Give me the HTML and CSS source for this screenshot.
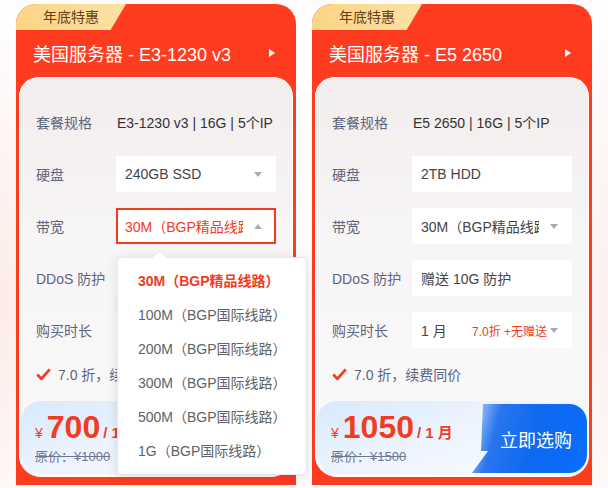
FILE: index.html
```html
<!DOCTYPE html>
<html lang="zh-CN">
<head>
    <meta charset="UTF-8">
    <meta name="viewport" content="width=device-width, initial-scale=1.0">
    <title>美国服务器 - 年底特惠</title>
    <link rel="stylesheet" href="styles.css">
</head>
<body>
    <div class="cards">
        <!-- E3-1230 v3 -->
        <div class="card">
            <div class="tag">年底特惠</div>
            <div class="card-title">
                <span>美国服务器 - E3-1230 v3</span>
                <i class="arrow-right"></i>
            </div>
            <div class="panel">
                <div class="row">
                    <span class="label">套餐规格</span>
                    <span class="plain">E3-1230 v3 | 16G | 5个IP</span>
                </div>
                <div class="row">
                    <span class="label">硬盘</span>
                    <div class="select">
                        <span class="select-text">240GB SSD</span>
                        <i class="caret"></i>
                    </div>
                </div>
                <div class="row">
                    <span class="label">带宽</span>
                    <div class="select is-open">
                        <span class="select-text">30M（BGP精品线路）</span>
                        <i class="caret up"></i>
                        <ul class="dropdown">
                            <li class="active">30M（BGP精品线路）</li>
                            <li>100M（BGP国际线路）</li>
                            <li>200M（BGP国际线路）</li>
                            <li>300M（BGP国际线路）</li>
                            <li>500M（BGP国际线路）</li>
                            <li>1G（BGP国际线路）</li>
                        </ul>
                    </div>
                </div>
                <div class="row">
                    <span class="label">DDoS 防护</span>
                    <div class="select">
                        <span class="select-text">赠送 10G 防护</span>
                    </div>
                </div>
                <div class="row">
                    <span class="label">购买时长</span>
                    <div class="select">
                        <span class="select-text">1 月</span>
                        <span class="discount">7.0折 +无赠送</span>
                        <i class="caret"></i>
                    </div>
                </div>
                <div class="note">
                    <svg class="check" width="15" height="13" viewBox="0 0 15 13"><path d="M1.2 6.6 L5.4 10.8 L13.8 1.4" fill="none" stroke="#f23c24" stroke-width="2.8" stroke-linejoin="round"/></svg>
                    <span>7.0 折，续费同价</span>
                </div>
                <div class="price-box">
                    <div class="price-info">
                        <div class="price"><span class="yen">¥</span><span class="amount">700</span><span class="unit">/ 1 月</span></div>
                        <div class="origin">原价：¥1000</div>
                    </div>
                    <a class="buy" href="#">立即选购</a>
                </div>
            </div>
        </div>

        <!-- E5 2650 -->
        <div class="card">
            <div class="tag">年底特惠</div>
            <div class="card-title">
                <span>美国服务器 - E5 2650</span>
                <i class="arrow-right"></i>
            </div>
            <div class="panel">
                <div class="row">
                    <span class="label">套餐规格</span>
                    <span class="plain">E5 2650 | 16G | 5个IP</span>
                </div>
                <div class="row">
                    <span class="label">硬盘</span>
                    <div class="select">
                        <span class="select-text">2TB HDD</span>
                    </div>
                </div>
                <div class="row">
                    <span class="label">带宽</span>
                    <div class="select">
                        <span class="select-text">30M（BGP精品线路）</span>
                        <i class="caret"></i>
                    </div>
                </div>
                <div class="row">
                    <span class="label">DDoS 防护</span>
                    <div class="select">
                        <span class="select-text">赠送 10G 防护</span>
                    </div>
                </div>
                <div class="row">
                    <span class="label">购买时长</span>
                    <div class="select">
                        <span class="select-text">1 月</span>
                        <span class="discount">7.0折 +无赠送</span>
                        <i class="caret"></i>
                    </div>
                </div>
                <div class="note">
                    <svg class="check" width="15" height="13" viewBox="0 0 15 13"><path d="M1.2 6.6 L5.4 10.8 L13.8 1.4" fill="none" stroke="#f23c24" stroke-width="2.8" stroke-linejoin="round"/></svg>
                    <span>7.0 折，续费同价</span>
                </div>
                <div class="price-box">
                    <div class="price-info">
                        <div class="price"><span class="yen">¥</span><span class="amount">1050</span><span class="unit">/ 1 月</span></div>
                        <div class="origin">原价：¥1500</div>
                    </div>
                    <a class="buy" href="#">立即选购</a>
                </div>
            </div>
        </div>
    </div>
</body>
</html>
```

FILE: styles.css
```css
* {
    margin: 0;
    padding: 0;
    box-sizing: border-box;
}

body {
    font-family: "Liberation Sans", "Noto Sans CJK SC", sans-serif;
    background:
        radial-gradient(ellipse 60px 260px at 0 300px, #fcebe7, rgba(252, 235, 231, 0)),
        radial-gradient(ellipse 40px 260px at 608px 300px, #fcefec, rgba(252, 239, 236, 0)),
        #fefcfc;
    height: 488px;
    overflow: hidden;
}

.cards {
    display: flex;
    gap: 16px;
    padding: 4px 16px 0;
}

.card {
    width: 280px;
    flex: none;
    background: #ff3c20;
    border-radius: 20px 20px 0 0;
    padding: 0 3px 8px;
}

/* header */
.tag {
    width: 110px;
    height: 26px;
    margin-left: -3px;
    padding-left: 27px;
    background: linear-gradient(90deg, #fcd485, #fde1a3);
    border-radius: 20px 0 6px 0;
    clip-path: polygon(0 0, 100% 0, 86% 100%, 0 100%);
    font-size: 14px;
    line-height: 26px;
    color: #6a3e17;
}

.card-title {
    display: flex;
    align-items: center;
    justify-content: space-between;
    height: 24px;
    margin: 11px 0 12px;
    padding: 0 18px 0 14px;
    color: #fff;
    font-size: 18px;
}

.arrow-right {
    border-left: 6px solid #fff;
    border-top: 4.5px solid transparent;
    border-bottom: 4.5px solid transparent;
}

/* body */
.panel {
    background: linear-gradient(180deg, #f3eded 0, #f7f5f6 40%, #faf9fa 100%);
    box-shadow: inset 0 0 0 1px rgba(255, 255, 255, 0.7);
    border-radius: 20px 20px 22px 22px;
    padding: 27px 17px 3px;
}

.row {
    display: flex;
    align-items: center;
    height: 36px;
    margin-bottom: 16px;
}

.label {
    width: 80px;
    flex: none;
    font-size: 14px;
    color: #5b6580;
}

.plain {
    font-size: 14px;
    color: #333;
    margin-left: 1px;
}

.select {
    position: relative;
    display: flex;
    align-items: center;
    width: 160px;
    height: 36px;
    padding: 0 14px 0 9px;
    background: #fff;
    font-size: 14px;
    color: #444;
}

.select-text {
    flex: 1;
    overflow: hidden;
    white-space: nowrap;
}

.select.is-open {
    border: 2px solid #f33b1f;
    padding: 0 12px 0 7px;
    color: #f33b1f;
}

.discount {
    font-size: 12px;
    color: #f33b1f;
}

.caret {
    flex: none;
    margin-left: 11px;
    border-top: 5px solid #a8abb2;
    border-left: 4px solid transparent;
    border-right: 4px solid transparent;
}

.discount + .caret {
    margin-left: 3px;
}

.caret.up {
    border-top: none;
    border-bottom: 5px solid #a8abb2;
}

/* bandwidth menu */
.dropdown {
    position: absolute;
    top: calc(100% + 15px);
    left: -1px;
    width: 190px;
    padding: 6px 0;
    list-style: none;
    background: #fff;
    border: 1px solid #e4e7ed;
    border-radius: 4px;
    box-shadow: 0 2px 12px rgba(0, 0, 0, 0.12);
    z-index: 5;
}

.dropdown::before {
    content: "";
    position: absolute;
    top: -6px;
    left: 36px;
    width: 10px;
    height: 10px;
    background: #fff;
    border-top: 1px solid #e4e7ed;
    border-left: 1px solid #e4e7ed;
    transform: rotate(45deg);
}

.dropdown li {
    height: 34px;
    line-height: 34px;
    padding: 0 20px;
    font-size: 14px;
    color: #606266;
    white-space: nowrap;
}

.dropdown li.active {
    color: #f33b1f;
    font-weight: bold;
}

.note {
    display: flex;
    align-items: center;
    gap: 7px;
    height: 20px;
    margin-top: 10px;
    font-size: 14px;
    color: #5b6580;
}

/* price + buy */
.price-box {
    display: flex;
    height: 73px;
    margin: 17px -15px 0;
    border-radius: 20px;
    background: linear-gradient(160deg, #d8e9fc 0%, #edf4fe 45%, #fbfdff 100%);
}

.price-info {
    flex: 1;
    display: flex;
    flex-direction: column;
    justify-content: center;
    padding-left: 14px;
    color: #f33b1f;
}

.price {
    height: 34px;
    line-height: 34px;
    white-space: nowrap;
}

.yen {
    font-size: 14px;
    margin-right: 4px;
}

.amount {
    font-size: 32px;
    font-weight: bold;
}

.unit {
    font-size: 15px;
    font-weight: bold;
    margin-left: 3px;
}

.origin {
    margin-top: 4px;
    font-size: 13px;
    line-height: 18px;
    color: #6f7890;
    text-decoration: line-through;
}

.buy {
    display: flex;
    align-items: center;
    justify-content: center;
    width: 116px;
    flex: none;
    margin: 3px 0 1px;
    padding-left: 14px;
    border-radius: 0 18px 18px 0;
    clip-path: polygon(12px 0, 100% 0, 100% 100%, 1px 100%, 17px 47px, 10px 47px);
    background: linear-gradient(105deg, #b7d2f8 0, #74a6f3 16px, #2a75ee 30px, #0d69ef 55%, #0a6dff 100%);
    color: #fff;
    font-size: 18px;
    text-decoration: none;
}
```
